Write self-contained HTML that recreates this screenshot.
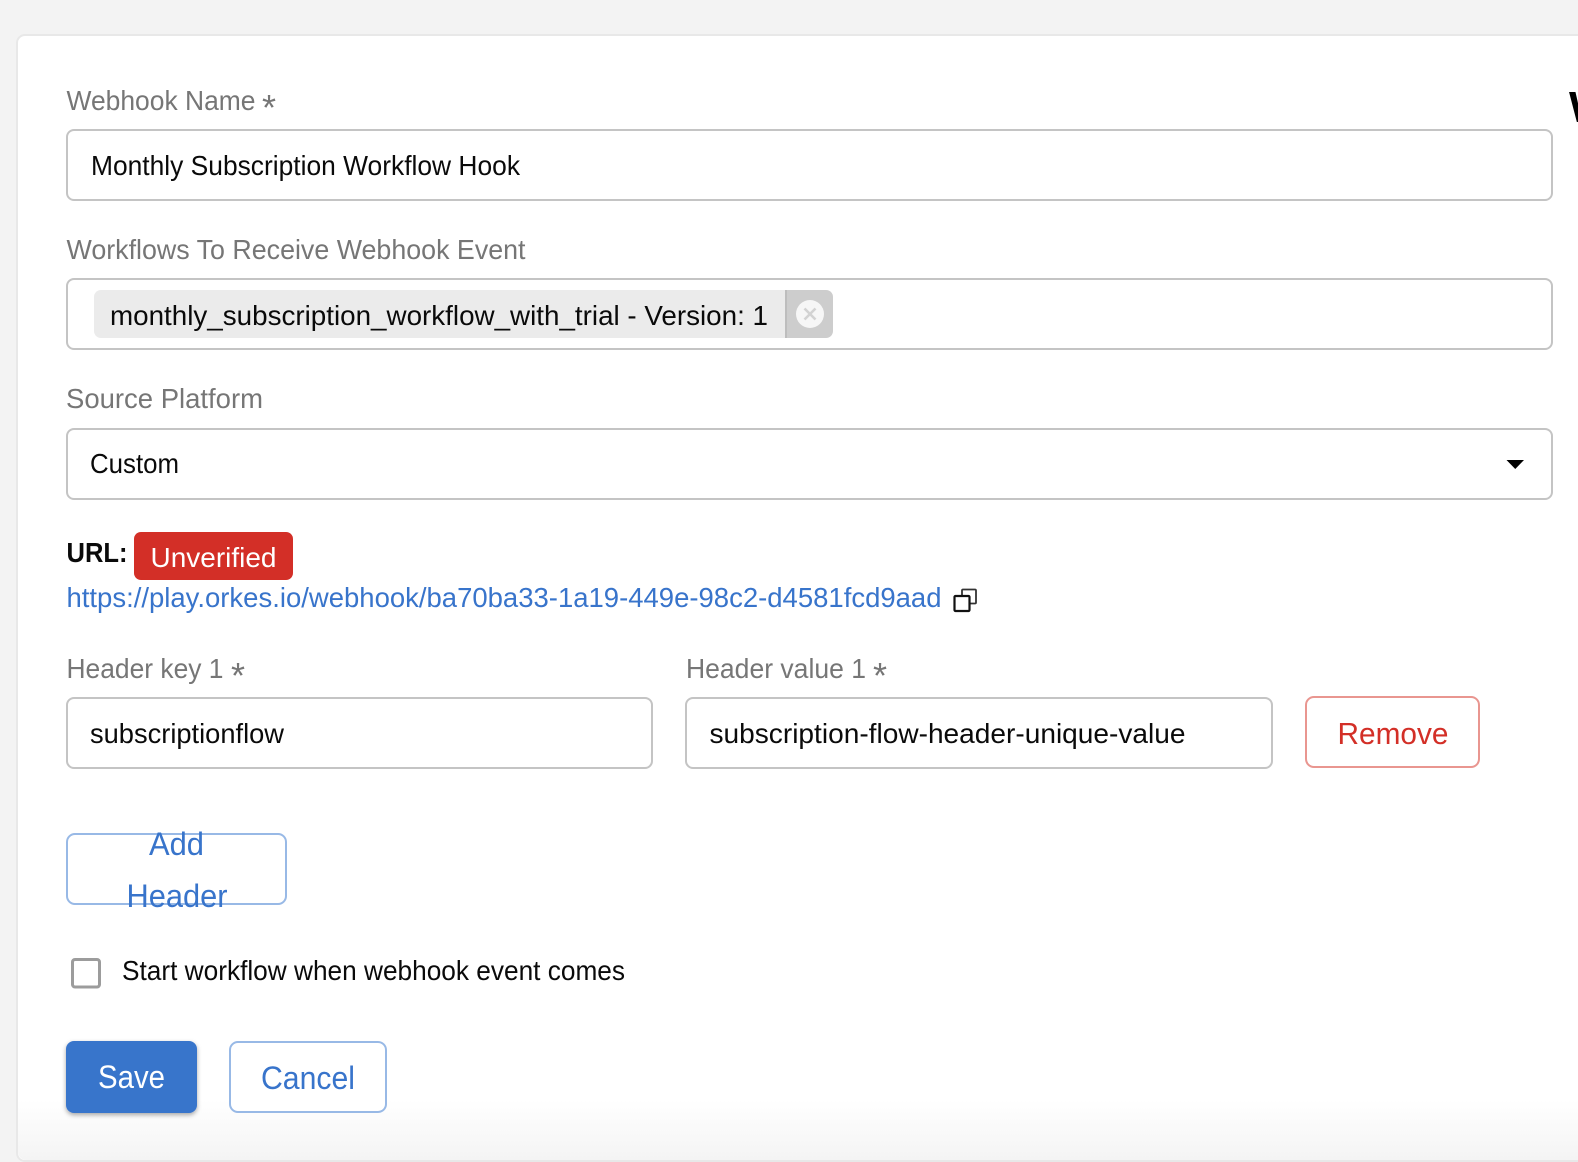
<!DOCTYPE html>
<html lang="en">
<head>
<meta charset="utf-8">
<title>Webhook</title>
<style>
html,body{margin:0;padding:0;width:1578px;height:1162px;overflow:hidden;background:#f3f3f3}
svg{display:block}
text{font-family:"Liberation Sans",Arial,sans-serif;font-size:28px;white-space:pre}
.l{fill:#767676}
.v{fill:#0a0a0a}
.b{fill:#3874cb}
.box{fill:#fff;stroke:#c4c4c4;stroke-width:2}
.ast{font-size:36px;fill:#767676}
</style>
</head>
<body>
<svg width="1578" height="1162" viewBox="0 0 1578 1162" xmlns="http://www.w3.org/2000/svg">
<defs>
<linearGradient id="fade" x1="0" y1="0" x2="0" y2="1">
<stop offset="0" stop-color="#fff"/>
<stop offset="1" stop-color="#f4f4f4"/>
</linearGradient>
<filter id="sh" x="-20%" y="-20%" width="140%" height="150%">
<feDropShadow dx="0" dy="2" stdDeviation="2.5" flood-color="#000" flood-opacity=".35"/>
</filter>
</defs>

<rect width="1578" height="1162" fill="#f3f3f3"/>
<rect x="17" y="35" width="1580" height="1126" rx="8" fill="#fff" stroke="#e8e8e8" stroke-width="2"/>
<path d="M18 1100H1578V1160H26a8 8 0 0 1-8-8Z" fill="url(#fade)"/>

<text x="1569" y="122" style="font-size:44px;font-weight:700" fill="#000">W</text>

<text class="l" x="66.5" y="110" textLength="189" lengthAdjust="spacingAndGlyphs">Webhook Name</text>
<text class="ast" x="262" y="120">*</text>
<rect class="box" x="67" y="130" width="1485" height="70" rx="7"/>
<text class="v" x="91" y="175" textLength="429" lengthAdjust="spacingAndGlyphs">Monthly Subscription Workflow Hook</text>

<text class="l" x="66.5" y="259" textLength="459" lengthAdjust="spacingAndGlyphs">Workflows To Receive Webhook Event</text>
<rect class="box" x="67" y="279" width="1485" height="70" rx="7"/>
<path d="M101 290H785V338H101a7 7 0 0 1-7-7V297a7 7 0 0 1 7-7Z" fill="#ebebeb"/>
<path d="M785 290H826a7 7 0 0 1 7 7V331a7 7 0 0 1-7 7H785Z" fill="#cdcdcd"/>
<rect x="785" y="290" width="2" height="48" fill="#bdbdbd"/>
<circle cx="810" cy="314" r="14" fill="#f6f6f6"/>
<path d="M804.500 308.500L815.500 319.500M815.500 308.500L804.500 319.500" stroke="#d2d2d2" stroke-width="2.600" fill="none"/>
<text class="v" x="110" y="325" textLength="658" lengthAdjust="spacingAndGlyphs">monthly_subscription_workflow_with_trial - Version: 1</text>

<text class="l" x="66" y="408" textLength="197" lengthAdjust="spacingAndGlyphs">Source Platform</text>
<rect class="box" x="67" y="429" width="1485" height="70" rx="7"/>
<text class="v" x="90" y="473" textLength="89" lengthAdjust="spacingAndGlyphs">Custom</text>
<path d="M1506.500 460H1524L1515.250 469Z" fill="#000"/>

<text x="66.500" y="562" textLength="61" lengthAdjust="spacingAndGlyphs" style="font-weight:700" fill="#0a0a0a">URL:</text>
<rect x="134" y="532" width="159" height="48" rx="7" fill="#d32f27"/>
<text x="150.500" y="567" textLength="126" lengthAdjust="spacingAndGlyphs" fill="#fff">Unverified</text>
<text class="b" x="66.500" y="607" textLength="875" lengthAdjust="spacingAndGlyphs">https://play.orkes.io/webhook/ba70ba33-1a19-449e-98c2-d4581fcd9aad</text>
<rect x="962" y="589.500" width="14" height="14" rx="1" fill="#fff" stroke="#333" stroke-width="1.800"/>
<rect x="954.500" y="596" width="15" height="15" rx="1" fill="#fff" stroke="#111" stroke-width="2.200"/>

<text class="l" x="66.500" y="678" textLength="157" lengthAdjust="spacingAndGlyphs">Header key 1</text>
<text class="ast" x="231" y="688">*</text>
<rect class="box" x="67" y="698" width="585" height="70" rx="7"/>
<text class="v" x="90" y="743" textLength="194" lengthAdjust="spacingAndGlyphs">subscriptionflow</text>

<text class="l" x="686" y="678" textLength="180" lengthAdjust="spacingAndGlyphs">Header value 1</text>
<text class="ast" x="873" y="688">*</text>
<rect class="box" x="686" y="698" width="586" height="70" rx="7"/>
<text class="v" x="709.500" y="743" textLength="476" lengthAdjust="spacingAndGlyphs">subscription-flow-header-unique-value</text>

<rect x="1306" y="697" width="173" height="70" rx="8" fill="#fff" stroke="#e99690" stroke-width="2"/>
<text x="1337.500" y="744" textLength="111" lengthAdjust="spacingAndGlyphs" style="font-size:31px" fill="#d32f27">Remove</text>

<rect x="67" y="834" width="219" height="70" rx="8" fill="#fff" stroke="#98b9e6" stroke-width="2"/>
<text class="b" x="149" y="855" textLength="55" lengthAdjust="spacingAndGlyphs" style="font-size:32px">Add</text>
<text class="b" x="126.500" y="907" textLength="101" lengthAdjust="spacingAndGlyphs" style="font-size:32px">Header</text>

<rect x="72.500" y="959.500" width="27" height="27.500" rx="2.500" fill="#fff" stroke="#9c9c9c" stroke-width="3"/>
<text class="v" x="122" y="980" textLength="503" lengthAdjust="spacingAndGlyphs">Start workflow when webhook event comes</text>

<rect x="66" y="1041" width="131" height="72" rx="8" fill="#3874cb" filter="url(#sh)"/>
<text x="98" y="1088" textLength="67" lengthAdjust="spacingAndGlyphs" style="font-size:32px" fill="#fff">Save</text>
<rect x="230" y="1042" width="156" height="70" rx="8" fill="#fff" stroke="#98b9e6" stroke-width="2"/>
<text class="b" x="261" y="1089" textLength="94" lengthAdjust="spacingAndGlyphs" style="font-size:32px">Cancel</text>
</svg>
</body>
</html>
